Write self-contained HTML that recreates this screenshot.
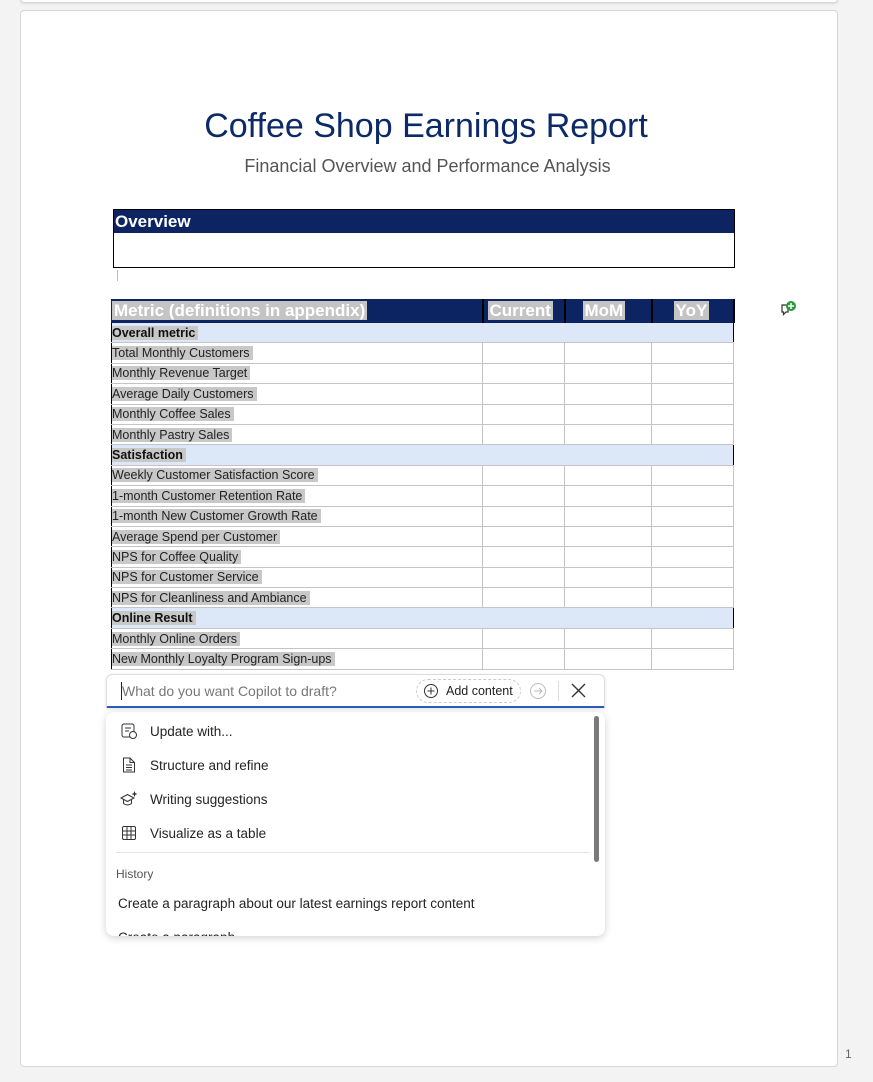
<!DOCTYPE html>
<html><head><meta charset="utf-8"><style>
*{margin:0;padding:0;box-sizing:border-box}
body{width:873px;height:1082px;background:#f3f3f3;position:relative;overflow:hidden;font-family:"Liberation Sans",sans-serif}
.abs{position:absolute}
.page{left:20px;top:10px;width:818px;height:1057px;background:#fff;border:1px solid #d6d6d6;border-radius:4px}
.prev{left:20px;top:-10px;width:818px;height:13px;background:#fff;border:1px solid #d6d6d6;border-radius:4px;box-shadow:0 1px 2px rgba(0,0,0,.1)}
table{border-collapse:collapse;position:absolute;left:111px;top:299px;width:622px;font-size:12.5px;table-layout:fixed}
td{height:20.4px;border:1px solid #c4c4c4;padding:0;vertical-align:middle;white-space:nowrap;overflow:hidden}
td:first-child{border-left:1px solid #000}
td span{background:#c8c8c8;padding-right:3px;color:#222}
tr.sec td{background:#dce8f7;border-left:none;border-right:none}
tr.sec td:first-child{border-left:1px solid #000}
tr.sec td:last-child{border-right:1px solid #000}
tr.sec span{font-weight:bold;color:#111}
tr.hd td{background:#0c2461;height:23px;border:1px solid #0c2461;border-right:2px solid #000;font-weight:bold;color:#fff;font-size:17px}
tr.hd span{background:#c4c4c4;color:#fff;padding:0 2px}
.item{left:120px;font-size:13.5px;color:#242424;display:flex;align-items:center;gap:12px}
</style></head><body>
<div class="abs prev"></div>
<div class="abs page"></div>
<div class="abs" style="left:0;width:852px;top:107px;text-align:center;font-size:34px;color:#0c2a66">Coffee Shop Earnings Report</div>
<div class="abs" style="left:0;width:855px;top:156px;text-align:center;font-size:18px;color:#555">Financial Overview and Performance Analysis</div>
<div class="abs" style="left:113px;top:209px;width:622px;height:59px;border:1px solid #000">
 <div style="background:#0c2461;color:#fff;font-weight:bold;font-size:17px;height:23px;line-height:24px;padding-left:1px">Overview</div>
</div>
<div class="abs" style="left:117px;top:270px;width:1px;height:11px;background:#bbb"></div>
<table>
<colgroup><col style="width:371px"><col style="width:82px"><col style="width:87px"><col style="width:82px"></colgroup>
<tr class="hd"><td><span>Metric (definitions in appendix)</span></td><td style="padding-left:4px"><span>Current</span></td><td style="padding-left:17px"><span>MoM</span></td><td style="padding-left:21px"><span>YoY</span></td></tr>
<tr class="sec"><td><span>Overall metric</span></td><td></td><td></td><td></td></tr>
<tr><td><span>Total Monthly Customers</span></td><td></td><td></td><td></td></tr>
<tr><td><span>Monthly Revenue Target</span></td><td></td><td></td><td></td></tr>
<tr><td><span>Average Daily Customers</span></td><td></td><td></td><td></td></tr>
<tr><td><span>Monthly Coffee Sales</span></td><td></td><td></td><td></td></tr>
<tr><td><span>Monthly Pastry Sales</span></td><td></td><td></td><td></td></tr>
<tr class="sec"><td><span>Satisfaction</span></td><td></td><td></td><td></td></tr>
<tr><td><span>Weekly Customer Satisfaction Score</span></td><td></td><td></td><td></td></tr>
<tr><td><span>1-month Customer Retention Rate</span></td><td></td><td></td><td></td></tr>
<tr><td><span>1-month New Customer Growth Rate</span></td><td></td><td></td><td></td></tr>
<tr><td><span>Average Spend per Customer</span></td><td></td><td></td><td></td></tr>
<tr><td><span>NPS for Coffee Quality</span></td><td></td><td></td><td></td></tr>
<tr><td><span>NPS for Customer Service</span></td><td></td><td></td><td></td></tr>
<tr><td><span>NPS for Cleanliness and Ambiance</span></td><td></td><td></td><td></td></tr>
<tr class="sec"><td><span>Online Result</span></td><td></td><td></td><td></td></tr>
<tr><td><span>Monthly Online Orders</span></td><td></td><td></td><td></td></tr>
<tr style="border-bottom:1px solid #000"><td><span>New Monthly Loyalty Program Sign-ups</span></td><td></td><td></td><td></td></tr>
</table>
<svg class="abs" style="left:780px;top:299px" width="18" height="18" viewBox="0 0 18 18"><path d="M2 6h6v7H6l-2.5 2.5V13H2z" fill="#fff" stroke="#333" stroke-width="1.2"/><circle cx="11" cy="7" r="5" fill="#2b9a3a"/><path d="M11 4v6M8 7h6" stroke="#fff" stroke-width="1.5"/></svg>
<div class="abs" style="left:106px;top:674px;width:499px;height:34px;background:#fff;border:1px solid #ddd;border-bottom:2px solid #2a5cb8;border-radius:6px 6px 2px 2px;box-shadow:0 1px 3px rgba(0,0,0,.12)"></div>
<div class="abs" style="left:121px;top:682px;width:1px;height:18px;background:#222"></div>
<div class="abs" style="left:122px;top:683px;font-size:14px;color:#777">What do you want Copilot to draft?</div>
<div class="abs" style="left:416px;top:679px;width:105px;height:24px;border:1px dashed #ccc;border-radius:12px;font-size:12.5px;color:#222;line-height:22px;padding-left:29px">Add content</div>
<svg class="abs" style="left:423px;top:683px" width="16" height="16"><circle cx="8" cy="8" r="6.5" fill="none" stroke="#333"/><path d="M8 4.5v7M4.5 8h7" stroke="#333"/></svg>
<svg class="abs" style="left:529px;top:682px" width="18" height="18"><circle cx="9" cy="9" r="7.5" fill="none" stroke="#bbb"/><path d="M5 9h8M10 6l3 3-3 3" fill="none" stroke="#bbb"/></svg>
<div class="abs" style="left:558px;top:681px;width:1px;height:20px;background:#ddd"></div>
<svg class="abs" style="left:571px;top:683px" width="15" height="15"><path d="M1 1l13 13M14 1L1 14" stroke="#333" stroke-width="1.4"/></svg>
<div class="abs" style="left:106px;top:712px;width:499px;height:224px;background:#fff;border-radius:8px;box-shadow:0 2px 8px rgba(0,0,0,.18);overflow:hidden">
 <div class="abs" style="left:488px;top:4px;width:5px;height:146px;background:#7a7a7a;border-radius:3px"></div>
 <div class="abs" style="left:10px;right:16px;top:140px;height:1px;background:#e3e3e3"></div>
 <div class="abs" style="left:10px;top:155px;font-size:12px;color:#555">History</div>
 <div class="abs" style="left:12px;top:184px;font-size:13.5px;color:#242424">Create a paragraph about our latest earnings report content</div>
 <div class="abs" style="left:12px;top:218px;font-size:13.5px;color:#242424">Create a paragraph</div>
</div>
<div class="abs item" style="top:722px"><svg width="18" height="18"><rect x="2" y="2" width="12" height="13" rx="2" fill="none" stroke="#333"/><path d="M5 6h6M5 9h4" stroke="#333"/><circle cx="13" cy="13" r="3.5" fill="#fff" stroke="#333"/></svg>Update with...</div>
<div class="abs item" style="top:756px"><svg width="18" height="18"><path d="M3.5 2h6.5l4.5 4.5V16h-11z" fill="none" stroke="#333"/><path d="M10 2v4.5h4.5M6 9h6M6 11.5h6M6 14h6" stroke="#333" fill="none"/></svg>Structure and refine</div>
<div class="abs item" style="top:790px"><svg width="18" height="18"><path d="M1 8l6.5-3.5L14 8l-6.5 3.5z" fill="none" stroke="#333"/><path d="M3.5 9.5v4q4 3 8 0v-4" fill="none" stroke="#333"/><path d="M14.5 1l.9 2.2 2.1.8-2.1.8-.9 2.2-.9-2.2-2.1-.8 2.1-.8z" fill="#333"/></svg>Writing suggestions</div>
<div class="abs item" style="top:824px"><svg width="18" height="18"><rect x="2.5" y="2.5" width="13" height="13" rx="1.5" fill="none" stroke="#333"/><path d="M2.5 7h13M2.5 11h13M7 2.5v13M11 2.5v13" stroke="#333"/></svg>Visualize as a table</div>
<div class="abs" style="left:845px;top:1047px;font-size:12px;color:#666">1</div>
</body></html>
